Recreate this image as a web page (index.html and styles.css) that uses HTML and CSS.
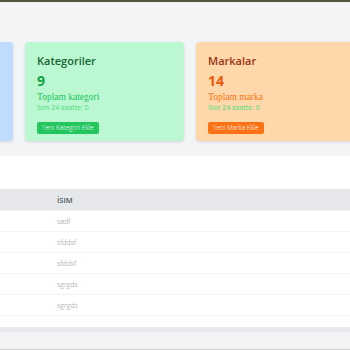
FILE: index.html
```html
<!DOCTYPE html>
<html>
<head>
    <link rel="stylesheet" href="styles.css">
</head>
<body>
    <div class="page">
        <div class="cards">
            <div class="card card-blue"></div>
            <div class="card card-green">
                <h3 class="card-title">Kategoriler</h3>
                <div class="card-number">9</div>
                <div class="card-label">Toplam kategori</div>
                <div class="card-sub">Son 24 saatte: 0</div>
                <a href="#" class="card-btn">Yeni Kategori Ekle</a>
            </div>
            <div class="card card-orange">
                <h3 class="card-title">Markalar</h3>
                <div class="card-number">14</div>
                <div class="card-label">Toplam marka</div>
                <div class="card-sub">Son 24 saatte: 0</div>
                <a href="#" class="card-btn">Yeni Marka Ekle</a>
            </div>
        </div>

        <div class="panel">
            <div class="panel-head"></div>
            <table class="table">
                <thead>
                    <tr>
                        <th class="col-id"></th>
                        <th>İsim</th>
                    </tr>
                </thead>
                <tbody>
                    <tr><td class="col-id"></td><td>sadf</td></tr>
                    <tr><td class="col-id"></td><td>sfddsf</td></tr>
                    <tr><td class="col-id"></td><td>sfddsf</td></tr>
                    <tr><td class="col-id"></td><td>sgrgds</td></tr>
                    <tr><td class="col-id"></td><td>sgrgds</td></tr>
                </tbody>
            </table>
        </div>
    </div>
    <div class="bottom-line"></div>
</body>
</html>
```

FILE: styles.css
```css
/* General Styles */
body {
    margin: 0;
    padding: 0;
    background-color: #f3f4f6;
    font-family: 'Open Sans', 'Liberation Sans', sans-serif;
    border-top: 2px solid #55543d;
    height: 348px;
    overflow: hidden;
    display: flex;
    flex-direction: column;
}

.page {
    flex: 1;
    padding-top: 40px;
}

/* Stat Cards */
.cards {
    display: flex;
    gap: 12px;
    margin-left: -146px;
}

.card {
    flex: 0 0 159px;
    height: 99px;
    box-sizing: border-box;
    padding: 11px 12px 12px;
    border-radius: 4px;
    box-shadow: 0 1px 3px rgba(0, 0, 0, 0.12);
}

.card-title {
    margin: 0;
    font-size: 11px;
    font-weight: 600;
    line-height: 16px;
}

.card-number {
    margin-top: 3px;
    font-size: 14px;
    font-weight: 700;
    line-height: 18px;
}

.card-label {
    margin-top: 1px;
    font-family: 'Liberation Serif', serif;
    font-size: 9.5px;
    line-height: 12px;
}

.card-sub {
    font-size: 7px;
    font-weight: 400;
    line-height: 10px;
    color: #4ade80;
}

.card-btn {
    display: inline-block;
    margin-top: 6px;
    padding: 0 5px;
    height: 12px;
    line-height: 12px;
    border-radius: 2px;
    font-size: 6.5px;
    font-weight: 300;
    color: #ffffff;
    text-decoration: none;
}

.card-blue {
    background-color: #bfdbfe;
}

.card-green {
    background-color: #bbf7d0;
}
.card-green .card-title { color: #166534; }
.card-green .card-number { color: #16a34a; }
.card-green .card-label { color: #22c55e; }
.card-green .card-btn { background-color: #22c55e; }

.card-orange {
    background-color: #fed7aa;
}
.card-orange .card-title { color: #9a3412; }
.card-orange .card-number { color: #ea580c; }
.card-orange .card-label { color: #f97316; }
.card-orange .card-btn { background-color: #f97316; }

/* Table Panel */
.panel {
    margin-top: 15px;
    padding-bottom: 11px;
    background-color: #ffffff;
    border-bottom: 4px solid #e9eaed;
    box-shadow: 0 1px 2px rgba(0, 0, 0, 0.05);
}

.panel-head {
    height: 33px;
}

.table {
    width: 100%;
    border-collapse: collapse;
}

.table th {
    height: 21px;
    padding: 0 0 0 12px;
    background-color: #e5e7eb;
    text-align: left;
    text-transform: uppercase;
    font-size: 7.5px;
    font-weight: 600;
    color: #4b5563;
}

.table td {
    height: 20px;
    padding: 0 0 0 12px;
    border-top: 1px solid #f3f4f6;
    font-size: 7px;
    font-weight: 300;
    color: #8b8f96;
}

.table tbody tr:last-child td {
    border-bottom: 1px solid #f3f4f6;
}

.table .col-id {
    width: 21px;
    padding: 0 12px;
}

.bottom-line {
    height: 1px;
    background-color: #c9c9c9;
}
```
